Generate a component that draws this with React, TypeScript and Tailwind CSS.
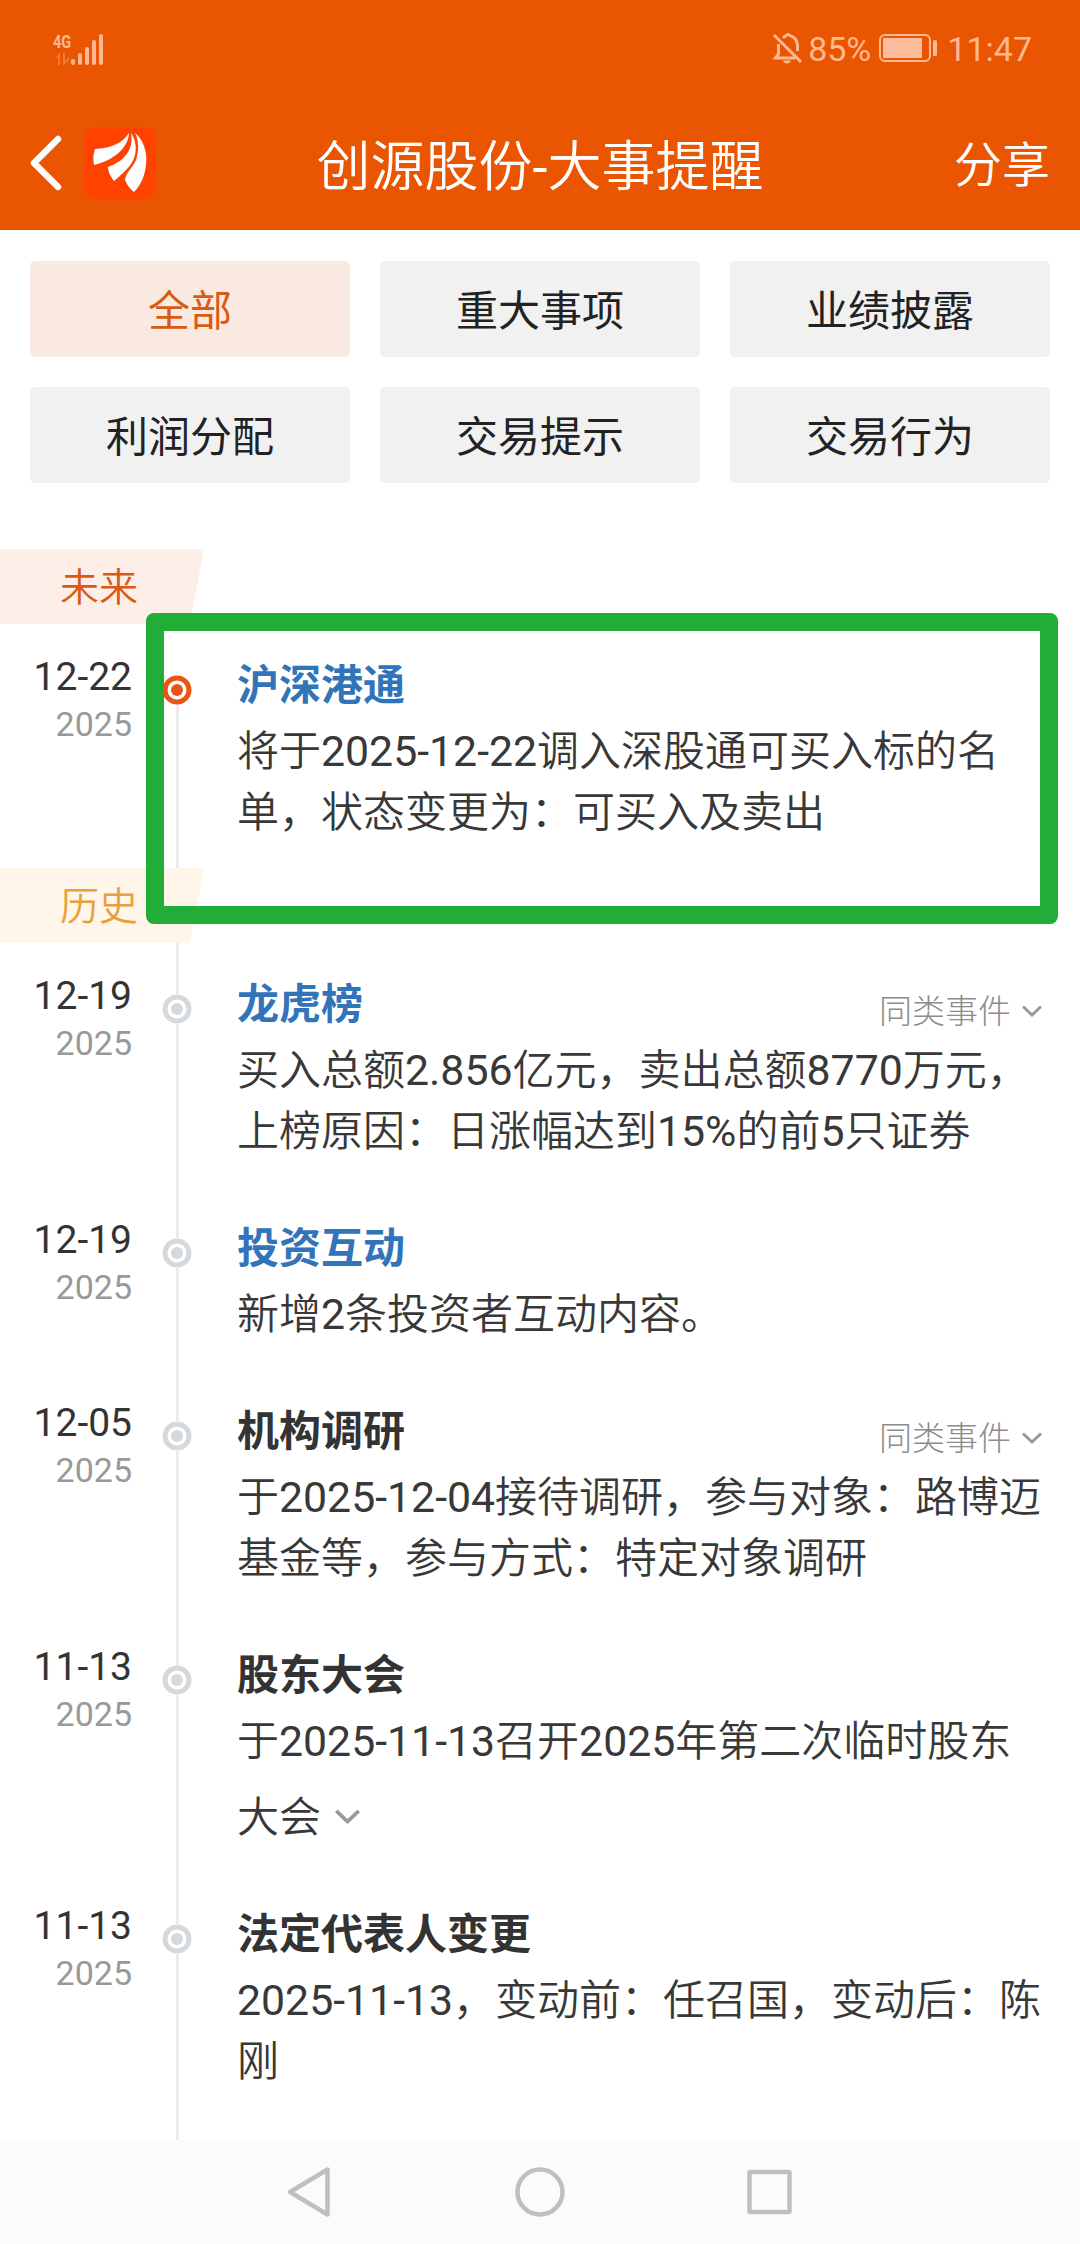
interface EventItem {
  date: string;
  year: string;
  title: string;
  link?: boolean;
  similar?: boolean;
  expandable?: boolean;
  lines: string[];
}

const tabs = ["全部", "重大事项", "业绩披露", "利润分配", "交易提示", "交易行为"];

const upcoming: EventItem[] = [
  {
    date: "12-22",
    year: "2025",
    title: "沪深港通",
    link: true,
    lines: ["将于2025-12-22调入深股通可买入标的名", "单，状态变更为：可买入及卖出"],
  },
];

const history: EventItem[] = [
  {
    date: "12-19",
    year: "2025",
    title: "龙虎榜",
    link: true,
    similar: true,
    lines: ["买入总额2.856亿元，卖出总额8770万元，", "上榜原因：日涨幅达到15%的前5只证券"],
  },
  {
    date: "12-19",
    year: "2025",
    title: "投资互动",
    link: true,
    lines: ["新增2条投资者互动内容。"],
  },
  {
    date: "12-05",
    year: "2025",
    title: "机构调研",
    similar: true,
    lines: ["于2025-12-04接待调研，参与对象：路博迈", "基金等，参与方式：特定对象调研"],
  },
  {
    date: "11-13",
    year: "2025",
    title: "股东大会",
    expandable: true,
    lines: ["于2025-11-13召开2025年第二次临时股东", "大会"],
  },
  {
    date: "11-13",
    year: "2025",
    title: "法定代表人变更",
    lines: ["2025-11-13，变动前：任召国，变动后：陈", "刚"],
  },
];

function StatusBar() {
  return (
    <div className="flex h-[96px] items-center justify-between pr-[48px] pl-[53px] text-[#ffb894]">
      <div className="flex items-end">
        <div className="flex w-[18px] flex-col">
          <span className="origin-left scale-x-[0.76] text-[19px] leading-[22px] font-bold">4G</span>
          <svg width="18" height="12" viewBox="0 20 18 12" fill="currentColor" opacity="0.4">
            <path d="M1 26l6-6v12h-2v-8zM10 20h2v8l4-4v3l-6 5z" />
          </svg>
        </div>
        <svg width="34" height="32" viewBox="18 0 34 32" fill="currentColor">
          <rect x="18" y="26" width="4" height="6" rx="2" />
          <rect x="25" y="20" width="4" height="12" rx="2" />
          <rect x="32" y="14" width="4" height="18" rx="2" />
          <rect x="39" y="7" width="4" height="25" rx="2" />
          <rect x="46" y="1" width="4" height="31" rx="2" />
        </svg>
      </div>
      <div className="flex items-center">
        <svg width="30" height="34" viewBox="0 0 30 34" fill="none" stroke="currentColor" strokeWidth="3">
          <path d="M1 4l27 27" />
          <path d="M10 7q2-2 3-2.400a2.500 2.500 0 0 1 4 0q7 2 7.500 9.500v6" />
          <path d="M5.500 13v10l-3 4H22" />
          <path d="M10 29.500h8q-1 3-4 3t-4-3z" fill="currentColor" stroke="none" />
        </svg>
        <span className="ml-[5px] w-[62px] pt-[2px] text-[34px] leading-[40px] tracking-[-0.2px]">85%</span>
        <svg className="ml-[9px]" width="60" height="30" viewBox="0 0 60 30" fill="none">
          <rect x="1" y="2" width="50" height="26" rx="5" stroke="currentColor" strokeWidth="2" />
          <rect x="4" y="5" width="39" height="20" rx="1" fill="#fbbd9d" />
          <rect x="54" y="7" width="4" height="16" rx="1.500" fill="currentColor" />
        </svg>
        <span className="ml-[8px] pt-[2px] text-[34px] leading-[40px]">11:47</span>
      </div>
    </div>
  );
}

function AppLogo() {
  return (
    <svg width="72" height="72" viewBox="0 0 72 72">
      <rect width="72" height="72" rx="12" fill="#ff4200" />
      <g fill="#fff">
        <path d="M45 6C45 14 38 31 10 38 9 33 9 27 11 22 26 21 38 17 45 6z" />
        <path d="M47 6C54 16 54 31 43 42 39 46 35 50 30 54 27 50 24 45 24 40 41 34 50 22 47 6z" />
        <path d="M51 6C60 13 65 28 61 44 59 53 55 60 50 65 46 62 43 58 41 53 42 45 48 42 52 33 55 24 55 14 51 6z" />
      </g>
    </svg>
  );
}

function Header() {
  return (
    <header className="h-[230px] bg-[#e95500] text-white">
      <StatusBar />
      <div className="grid h-[134px] grid-cols-[1fr_auto_1fr] items-center px-[30px]">
        <div className="flex items-center gap-[22px]">
          <svg width="32" height="56" viewBox="0 0 32 56" fill="none" stroke="#fff" strokeWidth="6.500">
            <path d="M28 4L4 28l24 24" strokeLinecap="round" strokeLinejoin="round" />
          </svg>
          <AppLogo />
        </div>
        <h1 className="pt-[9px] text-[54px] leading-[64px] font-normal">创源股份-大事提醒</h1>
        <button className="justify-self-end pt-[6px] text-[48px] leading-[64px]">分享</button>
      </div>
    </header>
  );
}

function Chevron({ className, width }: { className?: string; width: number }) {
  return (
    <svg
      className={className}
      width={width}
      height={width * 0.6}
      viewBox="0 0 20 12"
      fill="none"
      stroke="#999"
      strokeWidth="3"
    >
      <path d="M1 1.500l9 8.500 9-8.500" />
    </svg>
  );
}

// Latin digits sit a touch larger than the Chinese glyphs around them
function MixedText({ text }: { text: string }) {
  return (
    <>
      {text.split(/([\d.%-]+)/).map((part, i) =>
        i % 2 ? (
          <span key={i} className="text-[42.8px]">
            {part}
          </span>
        ) : (
          part
        ),
      )}
    </>
  );
}

function SectionTag({ label, tone }: { label: string; tone: "future" | "past" }) {
  return (
    <div
      className={`flex h-[75px] w-[204px] items-center pt-[3px] pl-[60px] text-[39px] leading-none [clip-path:polygon(0_0,100%_0,93%_100%,0_100%)] ${
        tone === "future" ? "bg-[#fdeee7] text-[#d95a12]" : "bg-[#fff5e8] text-[#e5a23c]"
      }`}
    >
      {label}
    </div>
  );
}

function Row({ item, active, last }: { item: EventItem; active?: boolean; last?: boolean }) {
  return (
    <li className={`flex ${last ? "grow" : ""}`}>
      <div className="w-[132px] pt-[29px] text-right">
        <p className="text-[39px] leading-[48px] text-[#333]">{item.date}</p>
        <p className="text-[34px] leading-[46px] text-[#999]">{item.year}</p>
      </div>
      <div className="ml-[30px] flex w-[30px] flex-col items-center">
        <div className={`h-[51px] w-[3px] ${active ? "" : "bg-[#ececee]"}`} />
        <svg
          className={active ? "text-[#e95513]" : "text-[#d5d9dc]"}
          width="30"
          height="30"
          viewBox="0 0 30 30"
        >
          <circle cx="15" cy="15" r="12" fill="#fff" stroke="currentColor" strokeWidth="5" />
          <circle cx="15" cy="15" r="6" fill="currentColor" />
        </svg>
        <div className="w-[3px] grow bg-[#ececee]" />
      </div>
      <div className="ml-[45px] grow pt-[32px] pb-[25px]">
        <div className="flex h-[65px] items-start justify-between">
          <h2
            className={`font-['Roboto','Noto_Sans_CJK_SC',sans-serif] text-[42px] leading-[60px] font-bold ${
              item.link ? "text-[#3274b9]" : "text-[#333]"
            }`}
          >
            {item.title}
          </h2>
          {item.similar && (
            <button className="flex items-center gap-[11px] pt-[18px] pr-[38px] font-['Noto_Sans_CJK_SC_Light','Noto_Sans_CJK_SC',sans-serif] text-[33px] leading-[33px] text-[#8c8c8c]">
              同类事件
              <Chevron className="mt-[2px]" width={20} />
            </button>
          )}
        </div>
        <div className="text-[42px] leading-[61px] whitespace-nowrap text-[#383838]">
          {item.lines.map((line, i) => {
            const more = item.expandable && i === item.lines.length - 1;
            return (
              <p key={line} className={more ? "mt-[15px] flex h-[61px] items-center" : "h-[61px]"}>
                <MixedText text={line} />
                {more && <Chevron className="mb-[2px] ml-[14px]" width={25} />}
              </p>
            );
          })}
        </div>
      </div>
    </li>
  );
}

function NavBar() {
  return (
    <nav className="flex h-[104px] items-center justify-center bg-[#fbfbfb]">
      <svg width="508" height="54" viewBox="0 0 508 54" fill="none" stroke="#bfbfbf" strokeWidth="4.500">
        <path d="M41.500 4.500v45L4 27z" strokeLinejoin="round" />
        <circle cx="254" cy="27" r="22.500" />
        <rect x="463.500" y="7" width="40" height="40" rx="1" />
      </svg>
    </nav>
  );
}

export default function App() {
  return (
    <div className="flex h-[2244px] w-[1080px] flex-col overflow-hidden bg-white font-['Roboto','Noto_Sans_CJK_SC_DemiLight','Noto_Sans_CJK_SC',sans-serif]">
      <Header />
      <div className="grid grid-cols-3 gap-[30px] px-[30px] pt-[31px] pb-[66px]">
        {tabs.map((tab, i) => (
          <button
            key={tab}
            className={`h-[96px] rounded-[5px] pt-[5px] font-['Roboto','Noto_Sans_CJK_SC',sans-serif] text-[42px] leading-none ${
              i === 0 ? "bg-[#f9e9e1] text-[#d95a12]" : "bg-[#f1f1f1] text-[#222]"
            }`}
          >
            {tab}
          </button>
        ))}
      </div>
      <main className="relative flex min-h-0 grow flex-col overflow-hidden">
        <SectionTag label="未来" tone="future" />
        <ul>
          {upcoming.map((item) => (
            <Row key={item.title} item={item} active />
          ))}
        </ul>
        <SectionTag label="历史" tone="past" />
        <ul className="flex grow flex-col">
          {history.map((item, i) => (
            <Row key={item.title} item={item} last={i === history.length - 1} />
          ))}
        </ul>
        {/* highlight frame laid over the upcoming event */}
        <div className="pointer-events-none absolute top-[64px] left-[146px] h-[311px] w-[912px] rounded-[8px] border-[18px] border-[#22ac38]" />
      </main>
      <NavBar />
    </div>
  );
}
